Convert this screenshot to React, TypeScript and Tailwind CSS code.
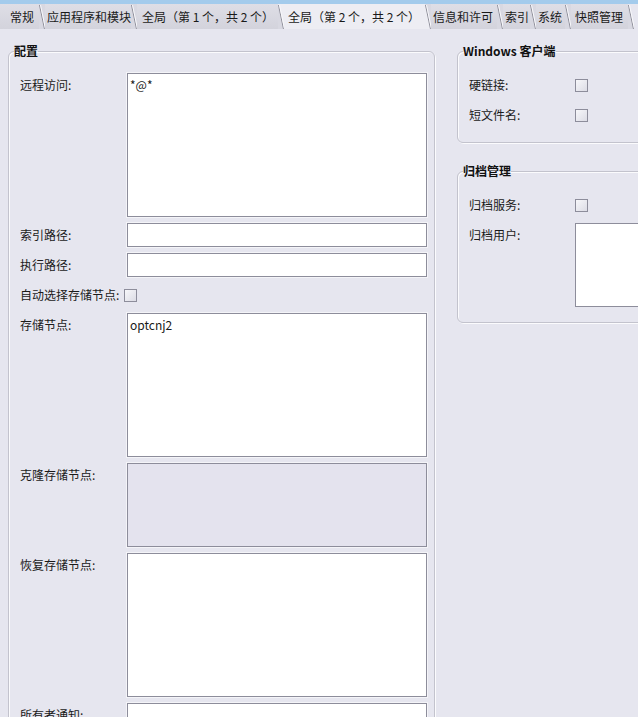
import type React from 'react';

const INACTIVE = '#d8d8e1';
const ACTIVE = '#ededf3';

interface Tab {
  label: string;
  cls: string;
  active?: boolean;
}

const tabs: Tab[] = [
  { label: '常规', cls: 'w-[39px] pl-[10px]' },
  { label: '应用程序和模块', cls: 'w-[86px] pl-[2px]' },
  { label: '全局（第 1 个，共 2 个）', cls: 'w-[141px] pl-[5px]' },
  { label: '全局（第 2 个，共 2 个）', cls: 'w-[141px] pl-[4px]', active: true },
  { label: '信息和许可', cls: 'w-[66px] pl-[2px]' },
  { label: '索引', cls: 'w-[27px] pl-[2px]' },
  { label: '系统', cls: 'w-[29px] pl-[2px]' },
  { label: '快照管理', cls: 'w-[57px] pl-[4px]' },
];

const Separator = ({ left, right }: { left: string; right: string }) => (
  <svg width="6" height="25" viewBox="0 0 6 25" className="shrink-0 block">
    <polygon points="0,0 0,25 6,25" fill={left} />
    <polygon points="0,0 6,0 6,25" fill={right} />
    <line x1="0.5" y1="1" x2="5.5" y2="25" stroke="#8e8e99" strokeWidth="1" />
    <line x1="1.5" y1="1" x2="6.5" y2="25" stroke="#f8f8fb" strokeWidth="1" />
  </svg>
);

const TabStrip = () => (
  <div className="flex h-[25px] items-stretch">
    {tabs.map((t, i) => {
      const next = tabs[i + 1];
      return (
        <div key={t.label} className="flex items-stretch">
          <div
            className={`${t.cls} flex items-center whitespace-nowrap overflow-hidden ${
              t.active ? 'bg-[#ededf3]' : 'bg-gradient-to-b from-[#dedee6] to-[#d3d3dc]'
            }`}
          >
            {t.label}
          </div>
          <Separator
            left={t.active ? ACTIVE : INACTIVE}
            right={next ? (next.active ? ACTIVE : INACTIVE) : '#e6e6ef'}
          />
        </div>
      );
    })}
    <div className="flex-1 bg-[#e6e6ef]" />
  </div>
);

const Group = ({
  title,
  className = '',
  children,
}: {
  title: string;
  className?: string;
  children: React.ReactNode;
}) => (
  <fieldset
    className={`border border-[#c3c3cd] rounded-[6px] shadow-[inset_1px_1px_0_#fbfbfd,1px_1px_0_#fbfbfd] ${className}`}
  >
    <legend className="-ml-[6px] px-0 font-bold leading-[16px] text-[#111]">{title}</legend>
    {children}
  </fieldset>
);

const Box = ({
  h,
  text,
  disabled,
}: {
  h: string;
  text?: string;
  disabled?: boolean;
}) => (
  <div
    className={`${h} w-[300px] border border-[#8d8d9b] shadow-[0_0_0_1px_#f4f4f8] px-[2px] pt-[4px] leading-[14px] ${
      disabled ? 'bg-[#e4e3ee]' : 'bg-white'
    }`}
  >
    {text}
  </div>
);

const Check = () => (
  <div className="w-[13px] h-[13px] border border-[#8d8d9b] bg-gradient-to-br from-[#f7f7fa] to-[#dcdce5]" />
);

const Row = ({
  label,
  labelW = 'w-[107px]',
  children,
}: {
  label: string;
  labelW?: string;
  children: React.ReactNode;
}) => (
  <div className="flex items-start">
    <div className={`${labelW} shrink-0 h-[24px] flex items-center whitespace-nowrap`}>{label}</div>
    {children}
  </div>
);

const CheckCell = () => (
  <div className="h-[24px] flex items-center">
    <Check />
  </div>
);

export default function App() {
  return (
    <div className="w-[638px] h-[717px] overflow-hidden bg-[#e6e6ef] text-[12px] text-[#1a1a1a] font-['Noto_Sans_CJK_SC',sans-serif]">
      <div className="h-[4px] bg-[#a3cbec]" />
      <TabStrip />
      <div className="flex pt-[14px] pl-[8px] gap-[22px]">
        <Group title="配置" className="w-[427px] shrink-0 pl-[11px] pb-[20px]">
          <div className="flex flex-col gap-[6px] pt-[14px]">
            <Row label="远程访问:">
              <Box h="h-[144px]" text="*@*" />
            </Row>
            <Row label="索引路径:">
              <Box h="h-[24px]" />
            </Row>
            <Row label="执行路径:">
              <Box h="h-[24px]" />
            </Row>
            <div className="flex items-center h-[24px] gap-[5px]">
              <span className="whitespace-nowrap">自动选择存储节点:</span>
              <Check />
            </div>
            <Row label="存储节点:">
              <Box h="h-[144px]" text="optcnj2" />
            </Row>
            <Row label="克隆存储节点:">
              <Box h="h-[84px]" disabled />
            </Row>
            <Row label="恢复存储节点:">
              <Box h="h-[144px]" />
            </Row>
            <Row label="所有者通知:">
              <Box h="h-[24px]" />
            </Row>
          </div>
        </Group>
        <div className="w-[220px] shrink-0 flex flex-col">
          <Group title="Windows 客户端" className="pl-[11px] pb-[15px]">
            <div className="flex flex-col gap-[6px] pt-[14px]">
              <Row label="硬链接:" labelW="w-[106px]">
                <CheckCell />
              </Row>
              <Row label="短文件名:" labelW="w-[106px]">
                <CheckCell />
              </Row>
            </div>
          </Group>
          <Group title="归档管理" className="mt-[20px] pl-[11px] pb-[15px]">
            <div className="flex flex-col gap-[6px] pt-[14px]">
              <Row label="归档服务:" labelW="w-[106px]">
                <CheckCell />
              </Row>
              <Row label="归档用户:" labelW="w-[106px]">
                <div className="w-[100px] h-[84px] bg-white border border-[#8d8d9b]" />
              </Row>
            </div>
          </Group>
        </div>
      </div>
    </div>
  );
}
